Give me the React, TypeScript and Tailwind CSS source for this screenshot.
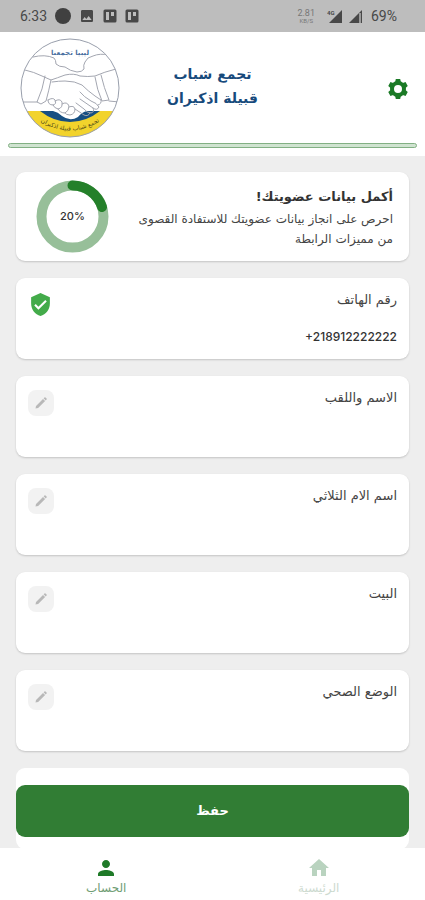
import React from 'react';
import { MdHome, MdImage, MdPerson, MdVerifiedUser } from 'react-icons/md';

const FIELDS = [
  { id: 'full-name', label: 'الاسم واللقب' },
  { id: 'mother-name', label: 'اسم الام الثلاثي' },
  { id: 'house', label: 'البيت' },
  { id: 'health', label: 'الوضع الصحي' },
];

const GEAR_TEETH = [0, 60, 120, 180, 240, 300];

function GearIcon() {
  return (
    <svg width="22" height="22" viewBox="0 0 22 22" aria-hidden="true">
      <circle
        cx="11"
        cy="11"
        r="6"
        fill="none"
        stroke="currentColor"
        strokeWidth="4"
      />
      {GEAR_TEETH.map((angle) => (
        <path
          key={angle}
          d="M8.8 1h4.4l.9 4.2H7.9z"
          fill="currentColor"
          transform={`rotate(${angle} 11 11)`}
        />
      ))}
    </svg>
  );
}

function PencilIcon() {
  return (
    <svg width="14" height="14" viewBox="0 0 14 14" aria-hidden="true">
      <path
        d="M1.5 12.5l.5-2.6 7-7 2.1 2.1-7 7zM9.6 2.3l.9-.9q.5-.4 1 0l1.1 1.1q.4.5 0 1l-.9.9z"
        fill="currentColor"
      />
    </svg>
  );
}

function BoardIcon() {
  return (
    <svg width="14" height="14" viewBox="0 0 14 14" aria-hidden="true">
      <rect x="0.5" y="0.5" width="13" height="13" rx="1.5" fill="#484848" />
      <rect x="3" y="3" width="3" height="8" fill="#bdbdbd" />
      <rect x="8" y="3" width="3" height="4" fill="#bdbdbd" />
    </svg>
  );
}

function SignalIcon({ network }: { network?: boolean }) {
  return (
    <svg width="16" height="15" viewBox="0 0 16 15" aria-hidden="true">
      <path d="M15 1v13H2z" fill="#484848" />
      {network ? (
        <text x="0" y="6" fontSize="6" fontWeight="700" fill="#484848">
          4G
        </text>
      ) : (
        <path d="M12 4v10h2V4z" fill="#9a9a9a" />
      )}
    </svg>
  );
}

function StatusBar() {
  return (
    <div
      dir="ltr"
      className="flex h-8 shrink-0 items-center justify-between bg-[#bdbdbd] pr-7 pl-5 font-[Roboto,sans-serif] text-sm text-[#484848]"
    >
      <div className="flex items-center gap-2">
        <span>6:33</span>
        <span className="size-4 rounded-full bg-[#404040]" />
        <MdImage size={16} />
        <BoardIcon />
        <BoardIcon />
      </div>
      <div className="flex items-center gap-1">
        <div className="mr-2 flex flex-col items-center text-[#777]">
          <span className="text-[9px] leading-[9px]">2.81</span>
          <span className="text-[6px] leading-[6px]">KB/S</span>
        </div>
        <SignalIcon network />
        <SignalIcon />
        <span className="ml-1">69%</span>
      </div>
    </div>
  );
}

function Logo() {
  return (
    <svg
      width="100"
      height="100"
      viewBox="0 0 100 100"
      role="img"
      aria-label="تجمع شباب قبيلة اذكيران"
    >
      <defs>
        <clipPath id="logo-disc">
          <circle cx="50" cy="50" r="49" />
        </clipPath>
        <path id="logo-arc" d="M14 79Q50 106 86 79" />
      </defs>
      <circle cx="50" cy="50" r="49" fill="#fff" />
      <g clipPath="url(#logo-disc)">
        <path d="M0 73h100v27H0z" fill="#f2d32c" />
        <path d="M20 73h60Q66 84 50 84Q34 84 20 73z" fill="#174f82" />
        <path d="M33 73Q38 74 42 78Q50 84 58 79Q62 74 67 73z" fill="#fff" />
        <g
          fill="none"
          stroke="#a3a6b0"
          strokeWidth="1"
          strokeLinecap="round"
          strokeLinejoin="round"
        >
          <path d="M13 19Q25 16 34 20Q36 22 36 26Q39 29 45 29Q50 33 57 34Q62 34 64 31Q63 27 65 24Q67 19 73 18Q80 15 89 17" />
          <path d="M5 32Q14 34 22 38L31 42Q37 40 45 37Q54 35 60 38Q68 39 75 38Q84 34 96 31" />
          <path d="M25 38Q23 51 17 64L21 66L26 63Q29 52 31 42" />
          <path d="M1 64H17M75 39Q77 52 82 63L89 62Q84 50 81 37M89 63L99 64" />
          <path d="M32 44Q39 43 45 43Q55 43 62 47Q68 53 75 58L81 62" />
          <path d="M28 62Q33 59 35 62Q37 66 33 67Q28 67 28 62M35 63Q40 60 42 64Q43 70 38 71Q34 70 33 67M42 66Q47 63 49 68Q49 73 45 75Q40 75 38 71M49 69Q54 67 55 71Q55 76 50 77Q46 77 45 75" />
          <path d="M60 54Q64 59 71 63Q77 65 79 69Q77 73 73 70L60 61M73 70Q75 74 71 75Q67 75 64 71L56 65M70 75Q68 79 64 77L55 71M81 62Q82 66 78 67" />
        </g>
      </g>
      <circle cx="50" cy="50" r="49" fill="none" stroke="#999fac" />
      <text
        x="50"
        y="17"
        textAnchor="middle"
        fontSize="7"
        fontWeight="700"
        fill="#4a6f9f"
      >
        ليبيا تجمعنا
      </text>
      <text fontSize="6" fill="#4d4718" textAnchor="middle">
        <textPath href="#logo-arc" startOffset="50%">
          تجمع شباب قبيلة اذكيران
        </textPath>
      </text>
    </svg>
  );
}

function Header() {
  return (
    <header className="shrink-0 bg-white px-2 pt-1.5 pb-2">
      <div className="grid h-[105px] grid-cols-3 items-start px-2">
        <button
          type="button"
          aria-label="الإعدادات"
          className="mt-10 justify-self-start text-[#1b7a26]"
        >
          <GearIcon />
        </button>
        <h1 className="mt-6 justify-self-center text-center text-sm leading-6 font-bold whitespace-nowrap text-[#174a7c]">
          تجمع شباب
          <br />
          قبيلة اذكيران
        </h1>
        <div className="justify-self-end pl-1">
          <Logo />
        </div>
      </div>
      <div className="h-[5px] rounded-full border border-[#82b084] bg-[#cfe3d0]" />
    </header>
  );
}

function ProgressRing({ percent }: { percent: number }) {
  const length = 2 * Math.PI * 31;
  return (
    <div className="relative size-[73px] shrink-0">
      <svg viewBox="0 0 73 73" className="-rotate-90" aria-hidden="true">
        <circle
          cx="36.5"
          cy="36.5"
          r="31"
          fill="none"
          stroke="#97bf99"
          strokeWidth="10"
        />
        <circle
          cx="36.5"
          cy="36.5"
          r="31"
          fill="none"
          stroke="#24802a"
          strokeWidth="10"
          strokeLinecap="round"
          strokeDasharray={`${(length * percent) / 100} ${length}`}
        />
      </svg>
      <span
        dir="ltr"
        className="absolute inset-0 flex items-center justify-center font-[Inter,sans-serif] text-[11px] font-medium text-[#333]"
      >
        {percent}%
      </span>
    </div>
  );
}

function Field({ id, label }: { id: string; label: string }) {
  return (
    <div className="flex h-[81px] shrink-0 items-start justify-between rounded-[9px] bg-white px-3 shadow-[0_1px_2px_#0000002e]">
      <div className="flex flex-1 flex-col pt-3">
        <label htmlFor={id} className="text-[13px] leading-5 text-[#444]">
          {label}
        </label>
        <input id={id} className="mt-4 h-5 w-full text-xs outline-none" />
      </div>
      <button
        type="button"
        aria-label={`تعديل ${label}`}
        className="mt-3.5 flex size-[26px] items-center justify-center rounded-lg bg-[#f2f2f2] text-[#b8b8b8]"
      >
        <PencilIcon />
      </button>
    </div>
  );
}

export default function App() {
  return (
    <div
      dir="rtl"
      className="flex h-dvh flex-col overflow-hidden bg-[#eeeeee] font-['DejaVu_Sans',sans-serif]"
    >
      <StatusBar />
      <Header />

      <div className="relative min-h-0 flex-1">
        <main className="flex h-full flex-col gap-[17px] overflow-hidden px-4 pt-4">
          <section className="flex h-[89px] shrink-0 items-center justify-between rounded-[9px] bg-white pr-4 pl-5 shadow-[0_1px_2px_#0000002e]">
            <div className="whitespace-nowrap">
              <h2 className="text-[13px] leading-6 font-bold text-[#333]">
                أكمل بيانات عضويتك!
              </h2>
              <p className="text-xs leading-5 text-[#444]">
                احرص على انجاز بيانات عضويتك للاستفادة القصوى
                <br />
                من مميزات الرابطة
              </p>
            </div>
            <ProgressRing percent={20} />
          </section>

          <div className="flex h-[81px] shrink-0 items-start justify-between rounded-[9px] bg-white px-3 shadow-[0_1px_2px_#0000002e]">
            <div className="flex flex-1 flex-col pt-3">
              <label
                htmlFor="phone"
                className="text-[13px] leading-5 text-[#444]"
              >
                رقم الهاتف
              </label>
              <input
                id="phone"
                type="tel"
                dir="ltr"
                readOnly
                value="+218912222222"
                className="mt-4 h-5 w-full text-right font-[Inter,sans-serif] text-xs font-medium text-[#333] outline-none"
              />
            </div>
            <MdVerifiedUser size={25} className="mt-3.5 text-[#43ab4a]" />
          </div>

          {FIELDS.map((field) => (
            <Field key={field.id} id={field.id} label={field.label} />
          ))}

          <div className="h-[81px] shrink-0 rounded-[9px] bg-white" />
        </main>

        <div className="absolute inset-x-4 bottom-[11px]">
          <button
            type="button"
            className="h-[52px] w-full rounded-[9px] bg-[#317d34] text-[13px] font-bold text-white"
          >
            حفظ
          </button>
        </div>
      </div>

      <nav className="grid h-[52px] shrink-0 grid-cols-2 bg-white text-xs leading-4">
        <a
          href="#home"
          className="flex flex-col items-center pt-2 text-[#b9d3bf]"
        >
          <MdHome size={24} />
          <span className="text-[#cddad0]">الرئيسية</span>
        </a>
        <a
          href="#account"
          className="flex flex-col items-center pt-2 text-[#1f7a28]"
        >
          <MdPerson size={24} />
          <span className="text-[#6f9d74]">الحساب</span>
        </a>
      </nav>
    </div>
  );
}
